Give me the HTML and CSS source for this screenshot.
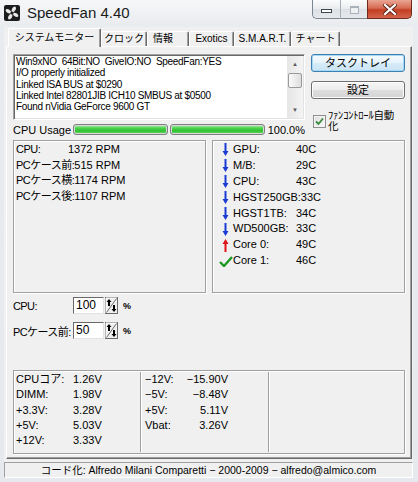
FILE: index.html
```html
<!DOCTYPE html>
<html lang="ja">
<head>
    <meta charset="UTF-8">
    <title>SpeedFan 4.40</title>
    <link rel="stylesheet" href="styles.css">
</head>
<body>

<div class="window">
    <!-- Title bar -->
    <div class="titlebar">
        <svg class="app-icon" width="16" height="16" viewBox="0 0 16 16">
            <rect x="0" y="0" width="16" height="16" rx="2" fill="#1c1c1c"/>
            <g fill="#e8e8e8">
                <path d="M8 8 C7 5 8 2 11 1.5 C13 2.5 12 6 8 8 Z"/>
                <path d="M8 8 C7 5 8 2 11 1.5 C13 2.5 12 6 8 8 Z" transform="rotate(90 8 8)"/>
                <path d="M8 8 C7 5 8 2 11 1.5 C13 2.5 12 6 8 8 Z" transform="rotate(180 8 8)"/>
                <path d="M8 8 C7 5 8 2 11 1.5 C13 2.5 12 6 8 8 Z" transform="rotate(270 8 8)"/>
            </g>
            <circle cx="8" cy="8" r="1.6" fill="#1c1c1c"/>
        </svg>
        <span class="title">SpeedFan 4.40</span>
        <div class="caption">
            <div class="cap-group">
                <span class="cap min"><i></i></span>
                <span class="cap max"><i></i></span>
            </div>
            <span class="cap close">
                <svg width="14" height="11" viewBox="0 0 14 11">
                    <path d="M2 1 L12 10 M12 1 L2 10" stroke="#5a2318" stroke-width="4" stroke-linecap="square"/>
                    <path d="M2 1 L12 10 M12 1 L2 10" stroke="#fff" stroke-width="2.2" stroke-linecap="square"/>
                </svg>
            </span>
        </div>
    </div>

    <div class="client">
        <!-- Tabs -->
        <div class="tabs">
            <div class="tab active t-sys">システムモニター</div>
            <div class="tab t-clock">クロック</div>
            <div class="tab t-info">情報</div>
            <div class="tab t-exo">Exotics</div>
            <div class="tab t-smart">S.M.A.R.T.</div>
            <div class="tab t-chart">チャート</div>
        </div>

        <div class="panel">
            <div class="top">
                <div class="left">
                    <div class="log">
                        <div class="log-text">Win9xNO  64Bit:NO  GiveIO:NO  SpeedFan:YES
I/O properly initialized
Linked ISA BUS at $0290
Linked Intel 82801JIB ICH10 SMBUS at $0500
Found nVidia GeForce 9600 GT</div>
                        <div class="scrollbar">
                            <span class="sb-arrow">▲</span>
                            <div class="sb-track"><span class="sb-thumb"></span></div>
                            <span class="sb-arrow">▼</span>
                        </div>
                    </div>
                    <div class="usage">
                        <span class="usage-label">CPU Usage</span>
                        <span class="bar"></span>
                        <span class="bar"></span>
                        <span class="pct">100.0%</span>
                    </div>
                </div>
                <div class="right">
                    <div class="btn default">タスクトレイ</div>
                    <div class="btn">設定</div>
                    <div class="check-row">
                        <span class="checkbox">
                            <svg width="9" height="9" viewBox="0 0 9 9">
                                <path d="M1 4.5 L3.5 7 L8 1.5" fill="none" stroke="#3b8a3b" stroke-width="1.8"/>
                            </svg>
                        </span>
                        <span class="check-label">ﾌｧﾝｺﾝﾄﾛｰﾙ自動<br>化</span>
                    </div>
                </div>
            </div>

            <!-- Fans and temperatures -->
            <div class="readings">
                <div class="box fans">
                    <div class="fan-row"><span class="fan-name">CPU:</span>1372 RPM</div>
                    <div class="fan-row"><span class="fan-name">PCケース前:</span>515 RPM</div>
                    <div class="fan-row"><span class="fan-name">PCケース横:</span>1174 RPM</div>
                    <div class="fan-row"><span class="fan-name">PCケース後:</span>1107 RPM</div>
                </div>
                <div class="box temps">
                    <div class="temp-row"><span class="ico"><svg width="7" height="13" viewBox="0 0 7 13"><path d="M2.5 0 H4.5 V8 H6.5 L3.5 13 L0.5 8 H2.5 Z" fill="#1b3bd6"/></svg></span><span class="temp-name">GPU:</span>40C</div>
                    <div class="temp-row"><span class="ico"><svg width="7" height="13" viewBox="0 0 7 13"><path d="M2.5 0 H4.5 V8 H6.5 L3.5 13 L0.5 8 H2.5 Z" fill="#1b3bd6"/></svg></span><span class="temp-name">M/B:</span>29C</div>
                    <div class="temp-row"><span class="ico"><svg width="7" height="13" viewBox="0 0 7 13"><path d="M2.5 0 H4.5 V8 H6.5 L3.5 13 L0.5 8 H2.5 Z" fill="#1b3bd6"/></svg></span><span class="temp-name">CPU:</span>43C</div>
                    <div class="temp-row"><span class="ico"><svg width="7" height="13" viewBox="0 0 7 13"><path d="M2.5 0 H4.5 V8 H6.5 L3.5 13 L0.5 8 H2.5 Z" fill="#1b3bd6"/></svg></span><span class="temp-name">HGST250GB:</span>33C</div>
                    <div class="temp-row"><span class="ico"><svg width="7" height="13" viewBox="0 0 7 13"><path d="M2.5 0 H4.5 V8 H6.5 L3.5 13 L0.5 8 H2.5 Z" fill="#1b3bd6"/></svg></span><span class="temp-name">HGST1TB:</span>34C</div>
                    <div class="temp-row"><span class="ico"><svg width="7" height="13" viewBox="0 0 7 13"><path d="M2.5 0 H4.5 V8 H6.5 L3.5 13 L0.5 8 H2.5 Z" fill="#1b3bd6"/></svg></span><span class="temp-name">WD500GB:</span>33C</div>
                    <div class="temp-row"><span class="ico"><svg width="7" height="13" viewBox="0 0 7 13"><path d="M2.5 13 H4.5 V5 H6.5 L3.5 0 L0.5 5 H2.5 Z" fill="#e01414"/></svg></span><span class="temp-name">Core 0:</span>49C</div>
                    <div class="temp-row"><span class="ico"><svg width="14" height="11" viewBox="0 0 14 11"><path d="M1 6 L5 10 L13 1" fill="none" stroke="#1c9a24" stroke-width="2.4"/></svg></span><span class="temp-name">Core 1:</span>46C</div>
                </div>
            </div>

            <!-- Fan speeds -->
            <div class="speeds">
                <div class="speed-row">
                    <span class="speed-name">CPU:</span>
                    <span class="num-input">100</span>
                    <svg class="spin" width="13" height="17" viewBox="0 0 13 17">
                        <rect x="0.5" y="0.5" width="12" height="16" fill="#f0f0f0" stroke="#6a6a6a"/>
                        <path d="M1 1 H12 M1 1 V16" stroke="#fff"/>
                        <path d="M1.5 15.5 L11.5 1.5" stroke="#6a6a6a"/>
                        <path d="M4 2 L1.5 5 H3 V9 H5 V5 H6.5 Z" fill="#000"/>
                        <path d="M9 15 L6.5 12 H8 V8 H10 V12 H11.5 Z" fill="#000"/>
                    </svg>
                    <span class="unit">%</span>
                </div>
                <div class="speed-row">
                    <span class="speed-name">PCケース前:</span>
                    <span class="num-input">50</span>
                    <svg class="spin" width="13" height="17" viewBox="0 0 13 17">
                        <rect x="0.5" y="0.5" width="12" height="16" fill="#f0f0f0" stroke="#6a6a6a"/>
                        <path d="M1 1 H12 M1 1 V16" stroke="#fff"/>
                        <path d="M1.5 15.5 L11.5 1.5" stroke="#6a6a6a"/>
                        <path d="M4 2 L1.5 5 H3 V9 H5 V5 H6.5 Z" fill="#000"/>
                        <path d="M9 15 L6.5 12 H8 V8 H10 V12 H11.5 Z" fill="#000"/>
                    </svg>
                    <span class="unit">%</span>
                </div>
            </div>

            <!-- Voltages -->
            <div class="box volts">
                <div class="vcol first">
                    <div class="vrow"><span class="vname">CPUコア:</span>1.26V</div>
                    <div class="vrow"><span class="vname">DIMM:</span>1.98V</div>
                    <div class="vrow"><span class="vname">+3.3V:</span>3.28V</div>
                    <div class="vrow"><span class="vname">+5V:</span>5.03V</div>
                    <div class="vrow"><span class="vname">+12V:</span>3.33V</div>
                </div>
                <div class="vcol second">
                    <div class="vrow"><span class="vname">−12V:</span><span class="vval">−15.90V</span></div>
                    <div class="vrow"><span class="vname">−5V:</span><span class="vval">−8.48V</span></div>
                    <div class="vrow"><span class="vname">+5V:</span><span class="vval">5.11V</span></div>
                    <div class="vrow"><span class="vname">Vbat:</span><span class="vval">3.26V</span></div>
                </div>
                <div class="vcol third"></div>
            </div>
        </div>

        <div class="status">コード化: Alfredo Milani Comparetti − 2000-2009 − alfredo@almico.com</div>
    </div>
</div>

</body>
</html>
```

FILE: styles.css
```css
* {
    box-sizing: border-box;
}

body {
    margin: 0;
    font-family: "Liberation Sans", "Noto Sans CJK JP", sans-serif;
    font-size: 11px;
    color: #000;
    background: #fff;
}

.window {
    width: 418px;
    height: 482px;
    padding: 0 5px 4px 4px;
    display: flex;
    flex-direction: column;
    background: linear-gradient(#f6f7f9, #e8ebef 27px, #e6e9ed);
}

/* Title bar */
.titlebar {
    height: 27px;
    display: flex;
    align-items: flex-start;
}

.app-icon {
    margin-top: 5px;
    flex-shrink: 0;
}

.title {
    margin: 4px 0 0 7px;
    font-size: 15px;
    color: #1a1a1a;
}

.caption {
    margin-left: auto;
    margin-right: 1px;
    display: flex;
}

.cap-group {
    display: flex;
    height: 19px;
    border: 1px solid #7d858e;
    border-top: none;
    border-right: none;
    border-radius: 0 0 0 5px;
    background: linear-gradient(#fbfcfc, #e9ecef 50%, #dde1e6 51%, #e6e9ec);
}

.cap {
    display: flex;
    align-items: center;
    justify-content: center;
    height: 19px;
}

.cap.min {
    width: 28px;
    border-right: 1px solid #a7adb4;
}

.cap.min i {
    width: 11px;
    height: 4px;
    margin-top: 3px;
    border: 1px solid #3e4650;
    background: #fff;
}

.cap.max {
    width: 26px;
}

.cap.max i {
    width: 9px;
    height: 8px;
    border: 1px solid #aab1b9;
    border-top-width: 2px;
    background: #eef0f2;
}

.cap.close {
    width: 45px;
    border: 1px solid #6f2a1e;
    border-top: none;
    border-radius: 0 0 5px 0;
    background: linear-gradient(#eaa594, #d66a53 45%, #c23e22 55%, #d4654a);
}

/* Client area */
.client {
    flex: 1;
    display: flex;
    flex-direction: column;
    background: #f0f0f0;
}

.tabs {
    height: 19px;
    display: flex;
    align-items: flex-end;
    padding-left: 4px;
    font-size: 10px;
}

.tab {
    height: 15px;
    line-height: 14px;
    text-align: center;
    white-space: nowrap;
    border: 1px solid;
    border-color: #fff #696969 transparent #fff;
    border-bottom: none;
    border-radius: 2px 2px 0 0;
    box-shadow: inset -1px 0 0 #a0a0a0;
}

.tab.active {
    height: 19px;
    line-height: 17px;
    margin-bottom: -1px;
    position: relative;
    z-index: 1;
    background: #f0f0f0;
}

.t-sys { width: 93px; }
.t-clock { width: 46px; }
.t-info { width: 42px; text-align: left; padding-left: 5px; }
.t-exo { width: 45px; }
.t-smart { width: 57px; }
.t-chart { width: 49px; }

.panel {
    height: 413px;
    margin: 0 1px 0 2px;
    padding: 7px 6px 0 6px;
    border: 1px solid;
    border-color: #fff #696969 #696969 #fff;
    box-shadow: inset -1px -1px 0 #a0a0a0;
}

.top {
    display: grid;
    grid-template-columns: 292px 94px;
    column-gap: 6px;
}

/* Log box */
.log {
    height: 66px;
    display: flex;
    background: #fff;
    border: 1px solid;
    border-color: #a0a0a0 #fff #fff #a0a0a0;
    box-shadow: inset 1px 1px 0 #696969, inset -1px -1px 0 #e3e3e3;
}

.log-text {
    flex: 1;
    padding: 1px 0 0 2px;
    font-size: 10px;
    letter-spacing: -0.3px;
    line-height: 11.3px;
    white-space: pre;
    overflow: hidden;
}

.scrollbar {
    width: 16px;
    margin: 1px 1px 1px 0;
    display: flex;
    flex-direction: column;
    background: linear-gradient(90deg, #e6e6e6, #f4f4f4);
}

.sb-arrow {
    height: 16px;
    font-size: 6px;
    line-height: 16px;
    text-align: center;
    color: #5a5a5a;
}

.sb-track {
    flex: 1;
    padding-top: 1px;
}

.sb-thumb {
    display: block;
    height: 15px;
    margin: 0 1px;
    border: 1px solid #9a9a9a;
    border-radius: 2px;
    background: linear-gradient(90deg, #fbfbfb, #ececec 50%, #dedede);
}

.usage {
    margin-top: 3px;
    height: 13px;
    display: flex;
    align-items: center;
}

.usage-label {
    width: 60px;
}

.bar {
    width: 95px;
    height: 11px;
    margin-right: 2px;
    border: 1px solid #7e7e7e;
    border-radius: 3px;
    background: linear-gradient(#b8eeb8, #4bd24b 35%, #2fc02f 65%, #6fdc6f);
    box-shadow: inset 0 0 0 1px #d9d9d9;
}

.pct {
    margin-left: auto;
}

/* Buttons on the right */
.btn {
    height: 18px;
    line-height: 16px;
    text-align: center;
    border: 1px solid #707070;
    border-radius: 3px;
    background: linear-gradient(#f7f7f7, #ececec 50%, #dedede 51%, #d4d4d4);
    box-shadow: inset 0 0 0 1px #fcfcfc;
}

.btn + .btn {
    margin-top: 9px;
}

.btn.default {
    border-color: #3c7fb1;
    box-shadow: inset 0 0 0 1px #a7d9f5;
    background: linear-gradient(#f5fbfe, #e6f3fb 50%, #d5ebf8 51%, #cbe4f5);
}

.check-row {
    margin-top: 11px;
    padding-left: 2px;
    display: flex;
    align-items: center;
    gap: 2px;
}

.checkbox {
    width: 13px;
    height: 13px;
    flex-shrink: 0;
    display: flex;
    align-items: center;
    justify-content: center;
    border: 1px solid #8e8f8f;
    background: linear-gradient(135deg, #dcdcdc, #fbfbfb);
    box-shadow: inset 0 0 0 1px #f4f4f4;
}

.check-label {
    font-size: 10.5px;
    line-height: 11px;
    letter-spacing: -0.2px;
    white-space: nowrap;
}

/* Readings */
.readings {
    margin-top: 4px;
    display: flex;
    gap: 6px;
}

.box {
    border: 1px solid #a0a0a0;
    box-shadow: 1px 1px 0 #fff, inset 1px 1px 0 #fff;
}

.fans,
.temps {
    width: 193px;
    height: 153px;
    padding-top: 1px;
}

.fans {
    padding-left: 2px;
}

.fan-row {
    height: 15.6px;
    line-height: 15.6px;
    white-space: nowrap;
}

.fan-name {
    display: inline-block;
    min-width: 52px;
    letter-spacing: -0.5px;
}

.temps {
    padding-left: 5px;
}

.temp-row {
    height: 15.9px;
    line-height: 15.9px;
    display: flex;
    align-items: center;
    white-space: nowrap;
}

.ico {
    width: 15px;
    display: flex;
    justify-content: center;
}

.temp-name {
    min-width: 63px;
}

/* Speeds */
.speeds {
    margin-top: 4px;
}

.speed-row {
    height: 17px;
    display: flex;
    align-items: center;
    white-space: nowrap;
}

.speed-row + .speed-row {
    margin-top: 8px;
}

.speed-name {
    min-width: 60px;
    letter-spacing: -0.6px;
}

.num-input {
    width: 31px;
    height: 17px;
    padding-left: 2px;
    font-size: 12px;
    line-height: 15px;
    background: #fff;
    border: 1px solid;
    border-color: #696969 #e3e3e3 #e3e3e3 #696969;
}

.spin {
    margin-left: 1px;
}

.unit {
    margin-left: 5px;
    font-size: 9px;
    font-weight: bold;
}

/* Voltages */
.volts {
    margin-top: 31px;
    height: 84px;
    padding: 1px 0;
    display: flex;
}

.vcol {
    height: 100%;
}

.vcol.first {
    width: 127px;
    padding-left: 2px;
    border-right: 1px solid #a0a0a0;
    box-shadow: 1px 0 0 #fff;
}

.vcol.second {
    width: 128px;
    padding-left: 4px;
    border-right: 1px solid #a0a0a0;
    box-shadow: 1px 0 0 #fff;
}

.vrow {
    height: 15.3px;
    line-height: 15.3px;
    white-space: nowrap;
}

.first .vname {
    display: inline-block;
    width: 57px;
}

.second .vname {
    display: inline-block;
    width: 30px;
}

.vval {
    display: inline-block;
    width: 53px;
    text-align: right;
}

/* Status bar */
.status {
    margin-top: 3px;
    height: 16px;
    line-height: 14px;
    text-align: center;
    white-space: nowrap;
    font-size: 10.5px;
    border: 1px solid;
    border-color: #a0a0a0 #fff #fff #a0a0a0;
}
```
